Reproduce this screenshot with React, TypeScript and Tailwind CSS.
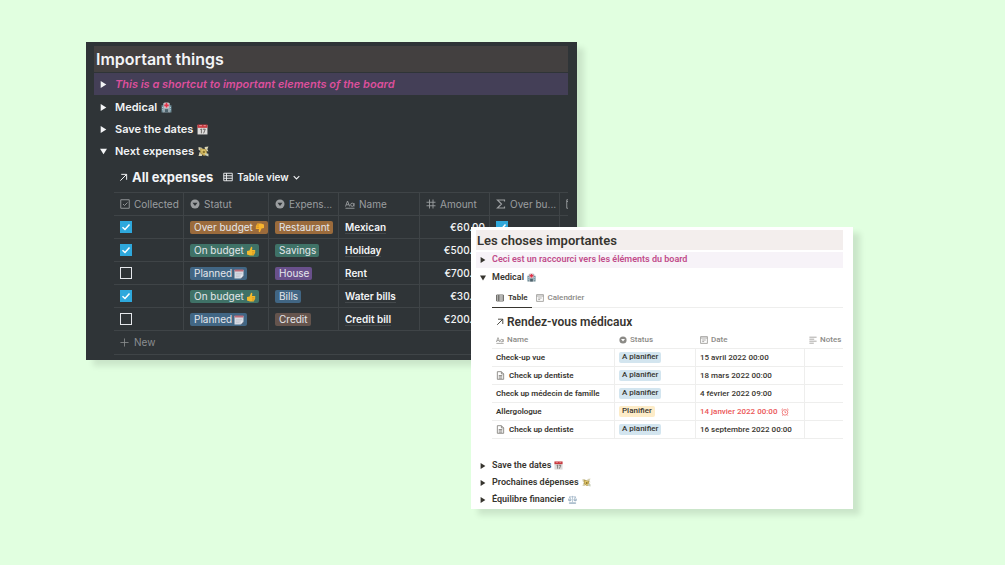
import type { ReactNode } from 'react';
import { clsx } from 'clsx';

type EmojiName = 'hospital' | 'calendar' | 'money' | 'scales' | 'up' | 'down' | 'notepad';

const emojiShapes: Record<EmojiName, ReactNode> = {
    hospital: (
        <>
            <path d="M1 6h4v13H1zM15 6h4v13h-4z" fill="#6f8c96" />
            <path d="M4 2h12v17H4z" fill="#a3b1b8" />
            <path d="M6 1h8v10H6z" fill="#e3c3c8" />
            <path d="M8.500 2h3v2.500H14v3h-2.500V10h-3V7.500H6v-3h2.500z" fill="#e0324a" />
            <path d="M7 13h6v6H7z" fill="#4d626c" />
            <path d="M2 9h2v2H2zM2 13h2v2H2zM16 9h2v2h-2zM16 13h2v2h-2z" fill="#a9d3e6" />
        </>
    ),
    calendar: (
        <>
            <path d="M1 2h18v17H1z" fill="#dcdbda" />
            <path d="M1 1h18v6H1z" fill="#c9393f" />
            <path d="M4 3h5M12 3h4" stroke="#f0a9a9" strokeWidth="1.500" />
            <path d="M6 10l2-1v8M10.500 9.500h4.500l-3 7.500" stroke="#55504f" strokeWidth="1.500" fill="none" />
        </>
    ),
    money: (
        <>
            <path d="M1 2l6 1 2 4-3 3-5-3zM12 2l7-1-2 5 2 4-6-2zM1 18l2-7 6 2-2 5z" fill="#d8d3b5" />
            <path d="M4 4l11 2 2 9-6 3-7-5z" fill="#b39a4c" />
            <path d="M6 6l7 1 2 7-4 2-5-4z" fill="#e0c66c" />
            <path d="M13 13l6 1v5l-6-2z" fill="#c7cdb8" />
            <circle cx="10.500" cy="11" r="2.200" fill="#8c7630" />
        </>
    ),
    scales: (
        <g fill="none" stroke="#91a9bd" strokeWidth="1.300">
            <path d="M10 2v14M3 4h14M4 4l-3 7h6zM16 4l-3 7h6z" />
            <path d="M1 11h6c-1 3-5 3-6 0zM13 11h6c-1 3-5 3-6 0zM3 17h14v2H3z" fill="#b7c8d6" />
        </g>
    ),
    up: (
        <>
            <path d="M2 10l5-1 3-7c2-1 3 1 2.500 3L12 8h5c2 0 2 2 1 3 1 1 .5 2.500-.5 3 .5 1 0 2-1 2.500 0 1.500-1 2.500-2.500 2.500H8l-6-2z" fill="#f2b92c" />
            <path d="M12 11h5M12 14h5M12 16.500h4" stroke="#c98518" strokeWidth="1" />
        </>
    ),
    down: (
        <>
            <path d="M18 10l-5 1-3 7c-2 1-3-1-2.500-3L8 12H3c-2 0-2-2-1-3-1-1-.5-2.500.5-3-.5-1 0-2 1-2.500C3.500 2 4.500 1 6 1h6l6 2z" fill="#f8b52e" />
            <path d="M8 9H3M8 6H3M8 3.500H4" stroke="#c98518" strokeWidth="1" />
        </>
    ),
    notepad: (
        <>
            <path d="M1 2h18v12l-5 5H1z" fill="#d5d9e2" />
            <path d="M1 1h18v4H1z" fill="#bb6b78" />
            <path d="M4 9h12M4 12h9M4 15h7" stroke="#b4bac7" strokeWidth="1" />
            <path d="M19 12v7h-6z" fill="#56657a" />
            <path d="M19 13h-5v5z" fill="#eef0f4" />
        </>
    ),
};

function Emoji({ name, className }: { name: EmojiName; className: string }) {
    return (
        <svg className={clsx('shrink-0', className)} viewBox="0 0 20 20" aria-hidden="true">
            {emojiShapes[name]}
        </svg>
    );
}

type IconName = 'table' | 'check' | 'select' | 'hash' | 'sum' | 'date' | 'notes' | 'page' | 'arrow' | 'chevron' | 'plus' | 'alarm' | 'title';

const iconShapes: Record<IconName, ReactNode> = {
    table: <path d="M1.500 2.500h17v15h-17zM1.500 7.500h17M1.500 12.500h17M7 2.500v15" />,
    check: <path d="M1.500 1.500h17v17h-17zM6 10l3 3 6-6" />,
    select: (
        <>
            <circle cx="10" cy="10" r="9" fill="currentColor" stroke="none" />
            <path d="M5 7.500h10L10 14z" className="fill-(--card)" stroke="none" />
        </>
    ),
    hash: <path d="M7 1v18M14 1v18M1 6.500h18M1 13.500h18" />,
    sum: <path d="M17 5V2H3l8 8-8 8h14v-3" strokeWidth="2.400" />,
    date: <path d="M1.500 1.500h17v17h-17zM1.500 5h17M5.500 10h9M5.500 14h5" />,
    notes: <path d="M1 3h18M1 8h12M1 13h18M1 18h11" />,
    page: <path d="M3 1.500h9l5 5v12H3zM12 1.500v5h5M6 10h8M6 13h8M6 16h8" />,
    arrow: <path d="M3 17L17 3M5 3h12v12" strokeWidth="2.200" />,
    chevron: <path d="M2 6l8 8 8-8" strokeWidth="3" />,
    plus: <path d="M10 1v18M1 10h18" />,
    alarm: (
        <>
            <circle cx="10" cy="11" r="7" />
            <path d="M10 7v4.500h3M1 5l4-3.500M19 5l-4-3.500M5 17l-2 2M15 17l2 2" />
        </>
    ),
    title: (
        <>
            <path d="M1 15L5 4l4.500 11M2.500 11.500h5.500M18 8v7M1 18.500h18" />
            <circle cx="14.500" cy="11.500" r="3.200" />
        </>
    ),
};

function Icon({ name, className }: { name: IconName; className: string }) {
    return (
        <svg
            className={clsx('shrink-0', className)}
            viewBox="0 0 20 20"
            fill="none"
            stroke="currentColor"
            strokeWidth="1.800"
            aria-hidden="true"
        >
            {iconShapes[name]}
        </svg>
    );
}

function Triangle({ open, className }: { open?: boolean; className: string }) {
    return (
        <svg className={clsx('shrink-0', className)} viewBox="0 0 10 10" fill="currentColor" aria-hidden="true">
            <path d={open ? 'M0 1h10L5 9z' : 'M1 0l8 5-8 5z'} />
        </svg>
    );
}

function Checkbox({ checked, label }: { checked: boolean; label: string }) {
    return (
        <span className="grid w-3 text-white">
            <input
                type="checkbox"
                defaultChecked={checked}
                aria-label={label}
                className="peer col-start-1 row-start-1 size-3 appearance-none border border-gray-200 checked:border-[#2ea8dc] checked:bg-[#2ea8dc]"
            />
            <svg
                className="pointer-events-none invisible col-start-1 row-start-1 size-3 peer-checked:visible"
                viewBox="0 0 12 12"
                fill="none"
                stroke="currentColor"
                strokeWidth="1.500"
                aria-hidden="true"
            >
                <path d="M2.500 6.200L5 8.500l4.500-5" />
            </svg>
        </span>
    );
}

const darkColumns: { icon: IconName; label: string }[] = [
    { icon: 'check', label: 'Collected' },
    { icon: 'select', label: 'Statut' },
    { icon: 'select', label: 'Expens...' },
    { icon: 'title', label: 'Name' },
    { icon: 'hash', label: 'Amount' },
    { icon: 'sum', label: 'Over bu...' },
    { icon: 'date', label: '' },
];

const statuses = {
    over: { label: 'Over budget', emoji: 'down', color: 'bg-[#9b6b3c]' },
    on: { label: 'On budget', emoji: 'up', color: 'bg-[#3f7267]' },
    planned: { label: 'Planned', emoji: 'notepad', color: 'bg-[#416684]' },
} as const;

type Expense = {
    collected: boolean;
    status: keyof typeof statuses;
    kind: string;
    kindColor: string;
    name: string;
    amount: string;
};

const expenses: Expense[] = [
    { collected: true, status: 'over', kind: 'Restaurant', kindColor: 'bg-[#9b6b3c]', name: 'Mexican', amount: '€60.00' },
    { collected: true, status: 'on', kind: 'Savings', kindColor: 'bg-[#3f7267]', name: 'Holiday', amount: '€500.00' },
    { collected: false, status: 'planned', kind: 'House', kindColor: 'bg-[#69508b]', name: 'Rent', amount: '€700.00' },
    { collected: true, status: 'on', kind: 'Bills', kindColor: 'bg-[#416684]', name: 'Water bills', amount: '€30.00' },
    { collected: false, status: 'planned', kind: 'Credit', kindColor: 'bg-[#65544d]', name: 'Credit bill', amount: '€200.00' },
];

function DarkTag({ color, children }: { color: string; children: ReactNode }) {
    return (
        <span className={clsx('inline-flex h-[13px] items-center gap-0.5 rounded-xs pr-[3px] pl-1 align-middle text-[10px] text-gray-200', color)}>
            {children}
        </span>
    );
}

function DarkToggle({ label, emoji, open }: { label: string; emoji: EmojiName; open?: boolean }) {
    return (
        <button type="button" aria-expanded={!!open} className="flex h-[22px] w-full items-center px-1.5 text-[11px] font-semibold">
            <Triangle open={open} className="mr-2 size-[7px]" />
            <span className="mr-1">{label}</span>
            <Emoji name={emoji} className="size-[11px]" />
        </button>
    );
}

function ExpensesCard() {
    return (
        <section className="col-start-2 col-end-4 row-start-1 self-start bg-[#2f3437] pt-1 pr-[9px] pb-[5px] pl-2 font-[Inter,sans-serif] text-gray-100 shadow-[7px_6px_6px_rgba(0,0,0,0.1)] [--card:#2f3437]">
            <h1 className="mb-px h-[26px] bg-[#434040] px-0.5 text-base/[26px] font-semibold">Important things</h1>
            <button type="button" aria-expanded="false" className="mb-px flex h-[22px] w-full items-center bg-[#443f57] px-1.5 text-[11px] font-semibold">
                <Triangle className="mr-2 size-[7px]" />
                <em className="text-[#dd4f9c]">This is a shortcut to important elements of the board</em>
            </button>
            <DarkToggle label="Medical" emoji="hospital" />
            <DarkToggle label="Save the dates" emoji="calendar" />
            <DarkToggle label="Next expenses" emoji="money" open />

            <div className="ml-5 overflow-hidden">
                <div className="flex h-[30px] items-center pl-[5px]">
                    <Icon name="arrow" className="mr-1 size-[9px]" />
                    <h2 className="mr-2.5 text-[13px]/5 font-bold">All expenses</h2>
                    <button type="button" className="flex items-center gap-1 text-[10px] font-semibold">
                        <Icon name="table" className="size-[10px]" />
                        Table view
                        <Icon name="chevron" className="size-[7px]" />
                    </button>
                </div>

                <table className="w-[516px] table-fixed border-separate border-spacing-0 text-[10px]">
                    <colgroup>
                        <col className="w-[70px]" />
                        <col className="w-[85px]" />
                        <col className="w-[70px]" />
                        <col className="w-[81px]" />
                        <col className="w-[70px]" />
                        <col className="w-[70px]" />
                        <col className="w-[70px]" />
                    </colgroup>
                    <thead>
                        <tr className="h-6">
                            {darkColumns.map((column, i) => (
                                <th key={i} className="border-y border-r border-[#3f4447] p-0 pl-1.5 text-left font-normal text-[#9b9ea0]">
                                    <span className="flex items-center gap-1 whitespace-nowrap">
                                        <Icon name={column.icon} className="size-[10px]" />
                                        {column.label}
                                    </span>
                                </th>
                            ))}
                        </tr>
                    </thead>
                    <tbody>
                        {expenses.map((row) => (
                            <tr key={row.name} className="h-[23px] *:border-r *:border-b *:border-[#3f4447] *:p-0 *:pr-1 *:pl-1.5 *:whitespace-nowrap">
                                <td><Checkbox checked={row.collected} label={`${row.name} collected`} /></td>
                                <td>
                                    <DarkTag color={statuses[row.status].color}>
                                        {statuses[row.status].label}
                                        <Emoji name={statuses[row.status].emoji} className="size-[10px]" />
                                    </DarkTag>
                                </td>
                                <td><DarkTag color={row.kindColor}>{row.kind}</DarkTag></td>
                                <td className="font-semibold">
                                    <span className="border-b border-[#44494c]">{row.name}</span>
                                </td>
                                <td className="text-right font-medium">{row.amount}</td>
                                <td><Checkbox checked={row.status === 'over'} label={`${row.name} over budget`} /></td>
                                <td />
                            </tr>
                        ))}
                    </tbody>
                </table>
                <button type="button" className="flex h-6 w-full items-center gap-1 border-b border-[#3f4447] pl-1.5 text-[10px] text-[#8b8e90]">
                    <Icon name="plus" className="mr-px size-[9px]" />
                    New
                </button>
            </div>
        </section>
    );
}

type Appointment = { name: string; page?: boolean; status: string; date: string; late?: boolean };

const appointments: Appointment[] = [
    { name: 'Check-up vue', status: 'A planifier', date: '15 avril 2022 00:00' },
    { name: 'Check up dentiste', page: true, status: 'A planifier', date: '18 mars 2022 00:00' },
    { name: 'Check up médecin de famille', status: 'A planifier', date: '4 février 2022 09:00' },
    { name: 'Allergologue', status: 'Planifier', date: '14 janvier 2022 00:00', late: true },
    { name: 'Check up dentiste', page: true, status: 'A planifier', date: '16 septembre 2022 00:00' },
];

const lightColumns: { icon: IconName; label: string }[] = [
    { icon: 'title', label: 'Name' },
    { icon: 'select', label: 'Status' },
    { icon: 'date', label: 'Date' },
    { icon: 'notes', label: 'Notes' },
];

function LightToggle({ label, emoji, open }: { label: string; emoji: EmojiName; open?: boolean }) {
    return (
        <button type="button" aria-expanded={!!open} className="flex h-[17px] w-full items-center px-1 text-[9px] font-semibold">
            <Triangle open={open} className="mr-1.5 size-1.5" />
            <span className="mr-[3px]">{label}</span>
            <Emoji name={emoji} className="size-[9px]" />
        </button>
    );
}

function AppointmentsCard() {
    return (
        <section className="col-start-3 col-end-5 row-start-1 mt-[185px] self-start bg-white pt-[3px] pr-2.5 pb-px pl-[5px] font-[Roboto,sans-serif] text-[#37352f] shadow-[7px_6px_6px_rgba(0,0,0,0.1)] [--card:#ffffff]">
            <h1 className="mb-0.5 h-5 bg-[#f3eeed] px-px text-[13px]/[22px] font-semibold">Les choses importantes</h1>
            <button type="button" aria-expanded="false" className="mb-px flex h-4 w-full items-center bg-[#f7f3f8] px-1 text-[9px] font-semibold">
                <Triangle className="mr-1.5 size-1.5" />
                <span className="text-[#c14c8a]">Ceci est un raccourci vers les éléments du board</span>
            </button>
            <LightToggle label="Medical" emoji="hospital" open />

            <div className="ml-4 pb-[18px]">
                <div role="tablist" className="mt-0.5 flex h-5 border-b border-[#eeeeed] text-[8px]">
                    <button type="button" role="tab" aria-selected="true" className="-mb-px flex items-center gap-1 border-b border-[#37352f] px-1 font-semibold">
                        <Icon name="table" className="size-2" />
                        Table
                    </button>
                    <button type="button" role="tab" aria-selected="false" className="flex items-center gap-1 px-1 font-medium text-[#8b8a86]">
                        <Icon name="date" className="size-2" />
                        Calendrier
                    </button>
                </div>
                <div className="mt-1 flex h-5 items-center gap-[3px] pl-1">
                    <Icon name="arrow" className="size-2" />
                    <h2 className="text-xs font-semibold">Rendez-vous médicaux</h2>
                </div>

                <table className="w-full table-fixed border-separate border-spacing-0 text-[8px]">
                    <colgroup>
                        <col className="w-[123px]" />
                        <col className="w-[81px]" />
                        <col className="w-[109px]" />
                        <col />
                    </colgroup>
                    <thead>
                        <tr className="h-[17px]">
                            {lightColumns.map((column) => (
                                <th key={column.label} className="border-b border-[#eeeeed] p-0 pl-1 text-left font-medium text-[#8b8a86]">
                                    <span className="flex items-center gap-[3px]">
                                        <Icon name={column.icon} className="size-2" />
                                        {column.label}
                                    </span>
                                </th>
                            ))}
                        </tr>
                    </thead>
                    <tbody>
                        {appointments.map((row, i) => (
                            <tr key={i} className="h-[18px] *:border-r *:border-b *:border-[#eeeeed] *:p-0 *:px-1 *:whitespace-nowrap *:last:border-r-0">
                                <td className="font-semibold">
                                    <span className="flex items-center gap-1">
                                        {row.page && <Icon name="page" className="size-[9px] text-[#7d7b76]" />}
                                        {row.name}
                                    </span>
                                </td>
                                <td>
                                    <span className={clsx('inline-flex h-[11px] items-center rounded-xs px-[3px] align-middle font-medium', row.late ? 'bg-[#fdecc8]' : 'bg-[#d3e5ef]')}>
                                        {row.status}
                                    </span>
                                </td>
                                <td className={clsx('font-medium', row.late && 'text-[#eb5757]')}>
                                    <span className="flex items-center gap-1">
                                        {row.date}
                                        {row.late && <Icon name="alarm" className="size-2" />}
                                    </span>
                                </td>
                                <td />
                            </tr>
                        ))}
                    </tbody>
                </table>
            </div>

            <LightToggle label="Save the dates" emoji="calendar" />
            <LightToggle label="Prochaines dépenses" emoji="money" />
            <LightToggle label="Équilibre financier" emoji="scales" />
        </section>
    );
}

export default function App() {
    return (
        <main className="grid min-h-screen grid-cols-[minmax(0,86fr)_minmax(0,385fr)_minmax(0,106fr)_minmax(0,276fr)_minmax(0,152fr)] bg-[#e1ffe0] pt-[42px] pb-14">
            <ExpensesCard />
            <AppointmentsCard />
        </main>
    );
}
